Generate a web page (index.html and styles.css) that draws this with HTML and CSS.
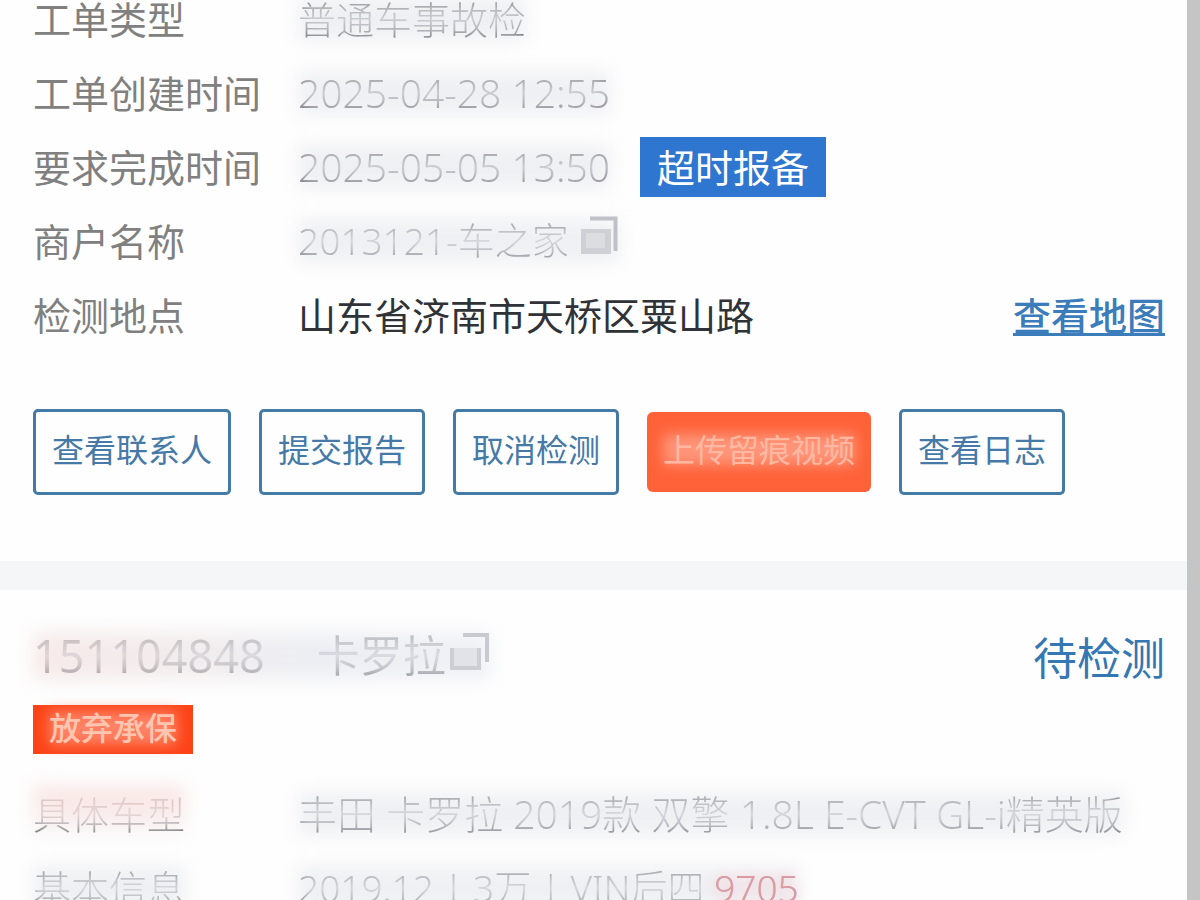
FILE: index.html
```html
<!DOCTYPE html>
<html lang="zh-CN">
<head>
<meta charset="utf-8">
<meta name="viewport" content="width=device-width, initial-scale=1">
<title>工单列表</title>
<link rel="stylesheet" href="styles.css">
</head>
<body>
<main class="list">
  <article class="card">
    <dl class="fields">
      <div class="row"><dt>工单类型</dt><dd><span class="masked">普通车事故检</span></dd></div>
      <div class="row"><dt>工单创建时间</dt><dd><span class="masked date">2025-04-28 12:55</span></dd></div>
      <div class="row"><dt>要求完成时间</dt><dd><span class="masked date">2025-05-05 13:50</span><button class="report" type="button">超时报备</button></dd></div>
      <div class="row"><dt>商户名称</dt><dd><span class="masked pale compact">2013121-车之家<svg class="copy" viewBox="0 0 40 42" aria-hidden="true"><rect x="2" y="14" width="30" height="25" fill="#cfd0d6"/><rect x="7" y="18" width="19" height="15" fill="#dcdde1"/><path d="M11 3.500H36.500V36" fill="none" stroke="#bfc0c8" stroke-width="4"/></svg></span></dd></div>
      <div class="row"><dt>检测地点</dt><dd class="place">山东省济南市天桥区粟山路</dd><dd class="end"><a class="map" href="#map">查看地图</a></dd></div>
    </dl>
    <div class="actions">
      <button class="action" type="button">查看联系人</button>
      <button class="action" type="button">提交报告</button>
      <button class="action" type="button">取消检测</button>
      <button class="action upload" type="button"><span>上传留痕视频</span></button>
      <button class="action" type="button">查看日志</button>
    </div>
  </article>
  <article class="card second">
    <header class="head">
      <h2 class="title masked"><span class="number">151104848</span><span>卡罗拉</span><svg class="copy small" viewBox="0 0 40 42" aria-hidden="true"><path d="M2 18V38H29V18" fill="#e2e3e8" stroke="#cdced4" stroke-width="4"/><path d="M13 5H37V32" fill="none" stroke="#c9cad1" stroke-width="4"/></svg></h2>
      <span class="status">待检测</span>
    </header>
    <div class="flag"><span>放弃承保</span></div>
    <dl class="fields">
      <div class="row"><dt><span class="masked pink">具体车型</span></dt><dd><span class="masked pale date">丰田 卡罗拉 2019款 双擎 1.8L E-CVT GL-i精英版</span></dd></div>
      <div class="row"><dt><span class="masked pale">基本信息</span></dt><dd><span class="masked pale compact">2019.12 | 3万 | VIN后四 <span class="vin">9705</span></span></dd></div>
    </dl>
  </article>
</main>
<div class="edge"></div>
</body>
</html>
```

FILE: styles.css
```css
* { box-sizing: border-box; }

body {
  margin: 0;
  height: 100vh;
  overflow: hidden;
  display: flex;
  background: #fefefe;
  color: #2f3338;
  font-family: "Noto Sans", "Noto Sans CJK SC", sans-serif;
  font-size: 38px;
}

.list { flex: 1; min-width: 0; }
.edge { width: 13px; background: #c5c5c6; }
.card { padding: 0 22px 66px 33px; }
.card > .fields:first-child { margin-top: -18px; }

.second {
  border-top: 29px solid #f5f6f8;
  padding-top: 28px;
}

.fields { margin: 0; }
.row { display: flex; align-items: center; height: 74px; line-height: 74px; white-space: nowrap; }
dt { width: 265px; color: #808080; }
dd { margin: 0; display: flex; align-items: center; }
.end { margin-left: auto; }
.map { color: #3b7cba; font-weight: 500; text-decoration-thickness: 3px; text-underline-offset: 3px; }

.masked {
  position: relative;
  isolation: isolate;
  display: inline-flex;
  align-items: center;
  line-height: 52px;
  white-space: pre;
  font-weight: 300;
  color: transparent;
  background: linear-gradient(#6c6c70 24%, #a2a3a9 50%, #5e5e62 80%);
  background-clip: text;
  -webkit-background-clip: text;
}

.masked::before {
  content: "";
  position: absolute;
  z-index: -1;
  inset: 4px 0;
  background: #e6e7ec;
  opacity: 0.6;
  filter: blur(9px);
}

.pale { background-image: linear-gradient(#808185 24%, #bcbdc3 50%, #6c6d72 80%); }
.pink { background-image: linear-gradient(#c4b4b4 24%, #ccc0c0 52%, #66666a 80%); }
.pink::before { background: linear-gradient(#f6d3d0, #f5e2e0 60%, #f1f1f3); inset: -2px 0 6px; }
.date { font-size: 39px; }
.compact { font-size: 37px; }
.vin { color: #dc9aa3; text-shadow: 0 0 14px #f3b8c0; }

.report {
  height: 60px;
  margin-left: 30px;
  padding: 0 17px;
  border: 0;
  background: #2e76d0;
  color: #fff;
  font: inherit;
  line-height: 58px;
}

.copy { width: 40px; height: 42px; margin-left: 10px; margin-top: -10px; }

.actions { display: flex; align-items: center; gap: 28px; margin-top: 57px; }
.action {
  padding: 16px;
  padding-bottom: 20px;
  border: 3px solid #447aa6;
  border-radius: 5px;
  background: transparent;
  color: #4579a8;
  font: inherit;
  font-size: 32px;
  line-height: 44px;
  white-space: nowrap;
}
.upload { border: 0; border-radius: 6px; background: #ff6238; color: #ffb9a3; }
.upload span, .flag span { position: relative; isolation: isolate; }
.upload span::before, .flag span::before {
  content: "";
  position: absolute;
  z-index: -1;
  inset: 6px 0;
  background: #ff957a;
  filter: blur(7px);
}

.head { display: flex; justify-content: space-between; align-items: center; height: 76px; font-size: 44px; white-space: nowrap; }
.title { margin: 0; font-size: 43px; font-weight: 400; line-height: 60px; background-image: linear-gradient(#a6a6aa 24%, #cbcbd0 50%, #828287 80%); }
.title::before { background: linear-gradient(90deg, #f3dcdc, #e8e2e4 40%, #e2e4ec 60%, #e6e8ef); inset: 6px 0; }
.number { margin-right: 52px; font-size: 45px; }
.small { margin-left: 4px; }
.status { color: #3577b2; }

.flag {
  width: fit-content;
  height: 49px;
  margin: 11px 0 23px;
  padding: 0 16px;
  background: #fc4317;
  color: #ffc5b0;
  font-size: 32px;
  font-weight: 500;
  line-height: 46px;
}
.flag span { display: inline-block; }
.flag span::before { background: #ff8163; }
```
